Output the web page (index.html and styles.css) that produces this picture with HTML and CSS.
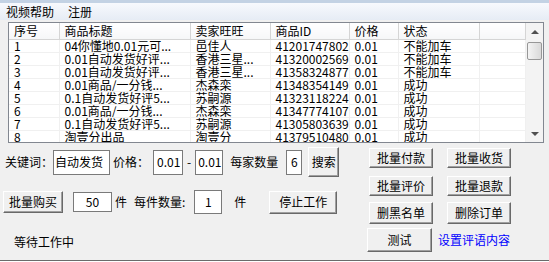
FILE: index.html
```html
<!DOCTYPE html>
<html>
	<head>
		<meta charset="UTF-8">
		<title>批量购买</title>
		<link rel="stylesheet" href="styles.css">
	</head>
	<body>
		<div class="titlebar"></div>
		<!--菜单-->
		<div class="menubar">
			<span>视频帮助</span>
			<span>注册</span>
		</div>

		<!--商品列表-->
		<div class="list">
			<div class="list-body">
				<table class="grid">
					<colgroup>
						<col style="width:50px"><col style="width:131px"><col style="width:80px"><col style="width:79px"><col style="width:49px"><col style="width:81px"><col>
					</colgroup>
					<thead>
						<tr><th>序号</th><th>商品标题</th><th>卖家旺旺</th><th>商品ID</th><th>价格</th><th>状态</th><th></th></tr>
					</thead>
					<tbody>
						<tr><td>1</td><td>04你懂地0.01元可...</td><td>邑佳人</td><td>41201747802</td><td>0.01</td><td>不能加车</td><td></td></tr>
						<tr><td>2</td><td>0.01自动发货好评...</td><td>香港三星...</td><td>41320002569</td><td>0.01</td><td>不能加车</td><td></td></tr>
						<tr><td>3</td><td>0.01自动发货好评...</td><td>香港三星...</td><td>41358324877</td><td>0.01</td><td>不能加车</td><td></td></tr>
						<tr><td>4</td><td>0.01商品/一分钱...</td><td>杰森栾</td><td>41348354149</td><td>0.01</td><td>成功</td><td></td></tr>
						<tr><td>5</td><td>0.1自动发货好评5...</td><td>苏嗣源</td><td>41323118224</td><td>0.01</td><td>成功</td><td></td></tr>
						<tr><td>6</td><td>0.01商品/一分钱...</td><td>杰森栾</td><td>41347774107</td><td>0.01</td><td>成功</td><td></td></tr>
						<tr><td>7</td><td>0.1自动发货好评5...</td><td>苏嗣源</td><td>41305803639</td><td>0.01</td><td>成功</td><td></td></tr>
						<tr><td>8</td><td>淘壹分出品</td><td>淘壹分</td><td>41379510480</td><td>0.01</td><td>成功</td><td></td></tr>
					</tbody>
				</table>
			</div>
			<div class="vscroll">
				<div class="arrow"><span class="tri-up"></span></div>
				<div class="thumb"></div>
				<div class="track"></div>
				<div class="arrow"><span class="tri-down"></span></div>
			</div>
		</div>

		<!--操作区-->
		<div class="controls">
			<div class="left">
				<div class="search-row">
					<span class="lbl-key">关键词：</span>
					<span class="field f-key">自动发货</span>
					<span class="lbl-price">价格：</span>
					<span class="field f-min">0.01</span>
					<span class="dash">-</span>
					<span class="field f-max">0.01</span>
					<span class="lbl-per">每家数量</span>
					<span class="field f-per">6</span>
					<button class="btn b-search">搜索</button>
				</div>
				<div class="buy-row">
					<button class="btn b-buy">批量购买</button>
					<span class="field f-count">50</span>
					<span class="unit">件</span>
					<span class="lbl-each">每件数量:</span>
					<span class="field f-each">1</span>
					<span class="unit2">件</span>
					<button class="btn b-stop">停止工作</button>
				</div>
				<div class="status">等待工作中</div>
			</div>
			<div class="right">
				<div class="btn-row r1"><button class="btn">批量付款</button><button class="btn">批量收货</button></div>
				<div class="btn-row r2"><button class="btn">批量评价</button><button class="btn">批量退款</button></div>
				<div class="btn-row r3"><button class="btn">删黑名单</button><button class="btn">删除订单</button></div>
				<div class="btn-row r4"><button class="btn b-test">测试</button><a href="#" class="link">设置评语内容</a></div>
			</div>
		</div>
		<div class="bottom-line"></div>
	</body>
</html>
```

FILE: styles.css
```css
*{
	padding: 0;
	margin: 0;
}
a{
	text-decoration: none;
}
body{
	width: 549px;
	height: 262px;
	overflow: hidden;
	background-color: #f0f0f0;
	font-family: "Noto Sans CJK SC", sans-serif;
	font-size: 12px;
	line-height: 14px;
	color: #000;
}
.titlebar{
	height: 3px;
	background-color: #c3d2e4;
}
.menubar{
	display: flex;
	align-items: center;
	gap: 14px;
	height: 17px;
	padding-left: 6px;
	background: linear-gradient(#f7f9fd, #e6ecf5);
}

/* 列表 */
.list{
	display: flex;
	height: 121px;
	margin: 2px 5px 0 8px;
	border: 1px solid #828790;
	background-color: #fff;
	box-sizing: border-box;
}
.list-body{
	flex: 1;
	overflow: hidden;
}
.grid{
	width: 517px;
	table-layout: fixed;
	border-collapse: collapse;
}
.grid th{
	height: 16px;
	padding: 0 0 0 5px;
	font-weight: normal;
	text-align: left;
	line-height: 16px;
	background: linear-gradient(#ffffff, #f6f7f8);
	border-right: 1px solid #d5d5d5;
	border-bottom: 1px solid #d5d5d5;
	white-space: nowrap;
	overflow: hidden;
}
.grid td{
	height: 12px;
	padding: 0 0 0 5px;
	line-height: 12px;
	border-right: 1px solid #f0f0f0;
	border-bottom: 1px solid #f0f0f0;
	white-space: nowrap;
	overflow: hidden;
}
.vscroll{
	display: flex;
	flex-direction: column;
	width: 17px;
	background-color: #f3f3f3;
}
.vscroll .arrow{
	display: flex;
	align-items: center;
	justify-content: center;
	height: 17px;
}
.tri-up{
	border-left: 4px solid transparent;
	border-right: 4px solid transparent;
	border-bottom: 4px solid #505050;
}
.tri-down{
	border-left: 4px solid transparent;
	border-right: 4px solid transparent;
	border-top: 4px solid #505050;
}
.vscroll .thumb{
	height: 16px;
	margin: 2px 1px 0;
	border: 1px solid #979797;
	border-radius: 2px;
	background: linear-gradient(90deg, #f4f4f4, #e6e6e6 50%, #d9d9d9);
}
.vscroll .track{
	flex: 1;
}

/* 操作区 */
.controls{
	display: flex;
	height: 117px;
}
.left{
	width: 345px;
}
.field{
	display: flex;
	align-items: center;
	box-sizing: border-box;
	background-color: #fff;
	border: 1px solid #7a7a7a;
}
.btn{
	display: flex;
	align-items: center;
	justify-content: center;
	box-sizing: border-box;
	font: inherit;
	color: #000;
	background-color: #f0f0f0;
	border: 1px solid;
	border-color: #ffffff #696969 #696969 #ffffff;
	box-shadow: inset -1px -1px #a0a0a0;
}
.search-row{
	display: flex;
	align-items: center;
	height: 30px;
	margin-top: 4px;
}
.search-row .field{
	height: 25px;
}
.lbl-key{
	margin-left: 5px;
}
.f-key{
	width: 57px;
	margin-left: 0;
	padding-left: 1px;
}
.lbl-price{
	margin-left: 3px;
}
.f-min{
	width: 30px;
	margin-left: 4px;
	padding-left: 3px;
}
.dash{
	margin-left: 4px;
}
.f-max{
	width: 28px;
	margin-left: 4px;
	padding-left: 2px;
}
.lbl-per{
	margin-left: 7px;
}
.f-per{
	width: 16px;
	margin-left: 8px;
	justify-content: center;
}
.b-search{
	width: 31px;
	height: 30px;
	margin-left: 6px;
}
.buy-row{
	display: flex;
	align-items: center;
	height: 26px;
	margin-top: 12px;
}
.b-buy{
	width: 60px;
	height: 22px;
	margin-left: 3px;
}
.f-count{
	width: 39px;
	height: 20px;
	margin-left: 10px;
	justify-content: center;
}
.unit{
	margin-left: 3px;
}
.lbl-each{
	margin-left: 7px;
}
.f-each{
	width: 28px;
	height: 24px;
	margin-left: 9px;
	justify-content: center;
}
.unit2{
	margin-left: 12px;
}
.b-stop{
	width: 68px;
	height: 23px;
	margin-left: 23px;
}
.status{
	margin-top: 21px;
	padding-left: 14px;
	line-height: 12px;
}
.right{
	display: flex;
	flex-direction: column;
	margin-left: 22px;
}
.btn-row{
	display: flex;
	gap: 14px;
	padding-left: 2px;
}
.btn-row .btn{
	width: 64px;
	height: 100%;
}
.r1{
	height: 20px;
	margin-top: 5px;
}
.r2{
	height: 20px;
	margin-top: 8px;
}
.r3{
	height: 22px;
	margin-top: 6px;
}
.r4{
	align-items: center;
	gap: 6px;
	height: 24px;
	margin-top: 4px;
	padding-left: 0;
}
.btn-row .b-test{
	width: 65px;
}
.link{
	color: #0000ff;
}
.bottom-line{
	height: 1px;
	border-top: 1px solid #6b6b6b;
	background-color: #fff;
}
```
